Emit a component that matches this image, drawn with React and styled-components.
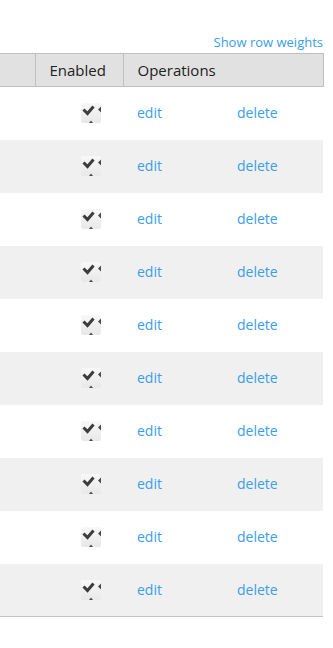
import React from 'react';
import styled, { createGlobalStyle } from 'styled-components';

const GlobalStyle = createGlobalStyle`
  body {
    margin: 0;
    background: #fff;
    font-family: "Open Sans", "Liberation Sans", sans-serif;
    color: #222;
  }
`;

const Page = styled.div`
  width: 323px;
  padding-top: 33px;
`;

const WeightsBar = styled.div`
  display: flex;
  justify-content: flex-end;
  height: 20px;
  line-height: 18px;
`;

const Link = styled.a`
  color: #3a9ee8;
  font-size: ${p => p.$size || 13}px;
  text-decoration: none;
  cursor: pointer;
`;

const Table = styled.table`
  width: 323px;
  border-collapse: collapse;
  table-layout: fixed;
  border-bottom: 1px solid #c4c4c4;
`;

const HeadCell = styled.th`
  height: 32px;
  padding: 0 0 0 14px;
  background: #e1e1e1;
  border: 1px solid #bfbfbf;
  border-left: ${p => (p.$first ? 'none' : '1px solid #bfbfbf')};
  font-size: 15px;
  font-weight: normal;
  text-align: left;
  color: #222;
`;

const Row = styled.tr`
  height: 53px;
  background: ${p => (p.$striped ? '#f0f0f0' : '#fff')};
`;

const Cell = styled.td`
  padding: 0 0 1px ${p => p.$pad || 14}px;
  vertical-align: middle;
  font-size: 14px;
`;

const Check = styled.span`
  display: inline-block;
  width: 20px;
  height: 20px;
  vertical-align: middle;
`;

function CheckIcon() {
  return (
    <Check>
      <svg width="20" height="20" viewBox="0 0 20 20">
        <defs>
          <linearGradient id="cb" x1="0" y1="0" x2="0" y2="1">
            <stop offset="0" stopColor="#f8f8f8" />
            <stop offset="1" stopColor="#e8e8e8" />
          </linearGradient>
        </defs>
        <rect x="0" y="0" width="20" height="20" rx="2" fill="url(#cb)" />
        <path d="M2.5 6.5 L6.5 10.5 L12.5 3.5" fill="none" stroke="#3c3c3c" strokeWidth="3" />
        <path d="M20 3.5 L17 6.5 L20 9.5 Z" fill="#4a4a4a" />
        <path d="M8 20 L10 17.5 L12 20 Z" fill="#4a4a4a" />
      </svg>
    </Check>
  );
}

const rows = Array.from({ length: 10 }, (_, i) => i);

export default function App() {
  return (
    <Page>
      <GlobalStyle />
      <WeightsBar>
        <Link>Show row weights</Link>
      </WeightsBar>
      <Table>
        <colgroup>
          <col style={{ width: 35 }} />
          <col style={{ width: 88 }} />
          <col style={{ width: 100 }} />
          <col style={{ width: 100 }} />
        </colgroup>
        <thead>
          <tr>
            <HeadCell $first />
            <HeadCell>Enabled</HeadCell>
            <HeadCell colSpan={2}>Operations</HeadCell>
          </tr>
        </thead>
        <tbody>
          {rows.map(i => (
            <Row key={i} $striped={i % 2 === 1}>
              <Cell />
              <Cell $pad={46}>
                <CheckIcon />
              </Cell>
              <Cell>
                <Link $size={14}>edit</Link>
              </Cell>
              <Cell>
                <Link $size={14}>delete</Link>
              </Cell>
            </Row>
          ))}
        </tbody>
      </Table>
    </Page>
  );
}
